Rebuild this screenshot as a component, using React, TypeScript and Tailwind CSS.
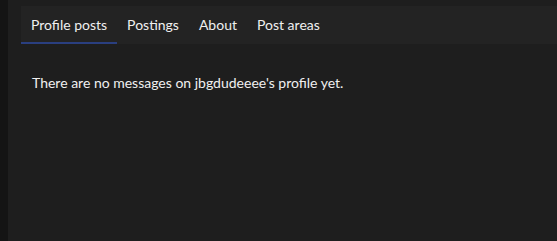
import React from 'react';

const tabs = ['Profile posts', 'Postings', 'About', 'Post areas'];

export default function App() {
    return (
        <div className="flex h-[241px] w-full bg-[#1e1e1e] font-['Lato',sans-serif] text-[14px] text-[#f0f0f0]">
            {/* dark edge */}
            <div className="w-2 shrink-0 bg-[#141414]" />

            <div className="flex-1 pt-[6px] pl-[13px]">
                <div className="flex h-[38px] bg-[#232323]">
                    {tabs.map((tab, i) => (
                        <div
                            key={tab}
                            className={`flex items-center px-[10px] ${i === 0 ? 'border-b-2 border-[#2a3f80]' : 'border-b-2 border-transparent'}`}
                        >
                            {tab}
                        </div>
                    ))}
                </div>

                <div className="pl-[11px] pt-[28px]">
                    There are no messages on jbgdudeeee's profile yet.
                </div>
            </div>
        </div>
    );
}
